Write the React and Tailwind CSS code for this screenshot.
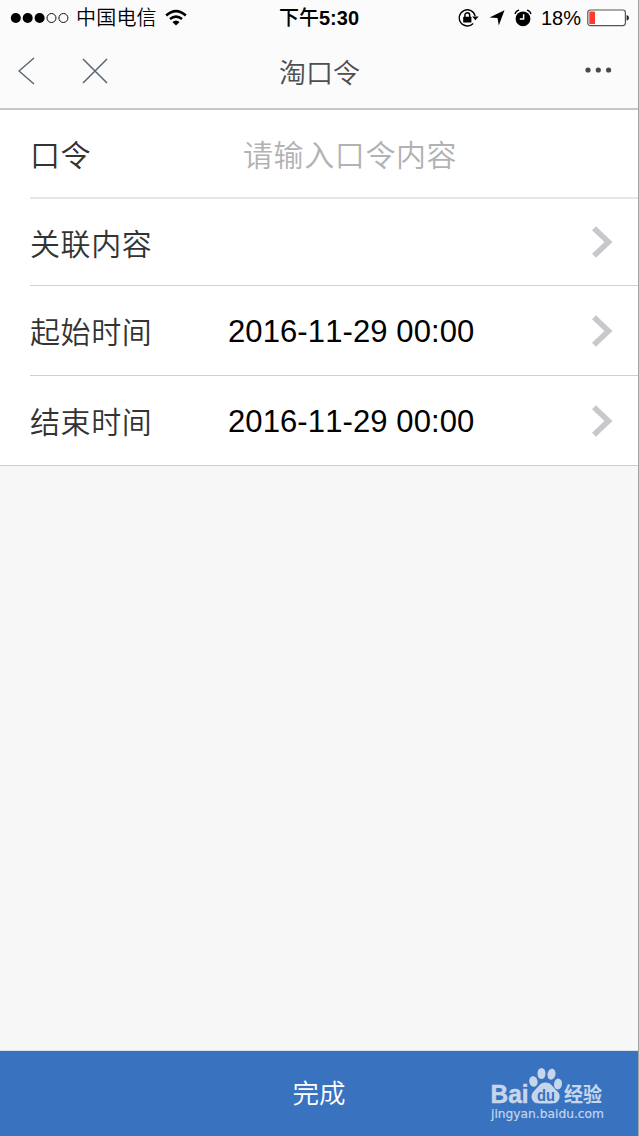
const rows = [
  { label: '口令', placeholder: '请输入口令内容', height: 'h-[89px]', line: 'border-b-2 border-[#e6e6e6]' },
  { label: '关联内容', height: 'h-[87px]', line: 'border-b border-[#d0d0d0]', arrow: true },
  { label: '起始时间', value: '2016-11-29 00:00', height: 'h-[90px]', line: 'border-b border-[#d0d0d0]', arrow: true },
  { label: '结束时间', value: '2016-11-29 00:00', height: 'h-[89px]', line: '', arrow: true },
];

function StatusBar() {
  return (
    <div className="h-[36px] flex items-center justify-between pl-[10px] pr-[8px] text-black">
      <div className="flex w-[200px] items-center">
        <svg width="60" height="12" viewBox="0 0 60 12">
          <circle cx="5.8" cy="6" r="5" />
          <circle cx="17.7" cy="6" r="5" />
          <circle cx="29.6" cy="6" r="5" />
          <circle cx="41.5" cy="6" r="4.5" fill="none" stroke="#111" />
          <circle cx="53.4" cy="6" r="4.5" fill="none" stroke="#111" />
        </svg>
        <span className="ml-[6px] text-[20px] leading-[36px] font-[350] whitespace-nowrap tracking-[0.2px]">中国电信</span>
        <svg className="ml-[8px]" width="22" height="18" viewBox="0 0 22 18" fill="none" stroke="#000" strokeWidth="2.6">
          <path d="M1.2 6.4Q11 -2.2 20.8 6.4" />
          <path d="M5 10.1Q11 5.2 17 10.1" />
          <path d="M11 16.5L7.4 13Q11 10 14.6 13Z" fill="#000" stroke="none" />
        </svg>
      </div>
      <span className="-ml-[2px] text-[20px] leading-[36px] font-medium">
        下午<b className="font-bold">5:30</b>
      </span>
      <div className="flex w-[200px] items-center justify-end">
        <svg width="21" height="20" viewBox="0 0 21 20" fill="none" stroke="#000" strokeWidth="1.3">
          <path d="M17.2 8A8.1 8.1 0 1 0 15.2 15.5" />
          <path d="M14.2 8.6H20.6L17.4 12.2Z" fill="#000" stroke="none" />
          <rect x="5.2" y="8.7" width="8.2" height="5.8" rx="0.5" fill="#000" stroke="none" />
          <path d="M6.9 9V7.2a2.4 2.4 0 0 1 4.8 0V9" strokeWidth="1.5" />
        </svg>
        <svg className="ml-[10px]" width="16" height="16" viewBox="0 0 16 16">
          <path d="M15.5 0.3L9.8 15.6L8.5 8L0.5 7.5Z" />
        </svg>
        <svg className="ml-[9px]" width="18" height="18" viewBox="0 0 18 18">
          <circle cx="9" cy="9.8" r="7.4" />
          <path d="M1 5Q1.8 1.9 5 1.1M17 5Q16.2 1.9 13 1.1" fill="none" stroke="#000" strokeWidth="1.3" />
          <path d="M9.6 5.2V10.1H5.8" fill="none" stroke="#fff" strokeWidth="1.5" />
        </svg>
        <span className="ml-[9px] text-[20px] leading-[36px]">18%</span>
        <svg className="ml-[6px]" width="43" height="18" viewBox="0 0 43 18">
          <rect x="0.8" y="1" width="37.6" height="15.6" rx="2.5" fill="#fff" stroke="#555" strokeWidth="1.2" />
          <rect x="2.3" y="2.5" width="5.7" height="12.6" rx="0.6" fill="#ff3b30" />
          <path d="M39.6 6Q42 6.5 42 8.8T39.6 11.7Z" fill="#222" />
        </svg>
      </div>
    </div>
  );
}

function NavBar() {
  return (
    <div className="h-[72px] flex items-center justify-between pl-[18px] pr-[26px]">
      <div className="flex w-[120px] items-center pb-[2px]">
        <svg width="18" height="28" viewBox="0 0 18 28" fill="none" stroke="#5a6370" strokeWidth="1.4">
          <path d="M16 1L1 14L16 27" />
        </svg>
        <svg className="ml-[46px]" width="26" height="26" viewBox="0 0 26 26" fill="none" stroke="#5a6370" strokeWidth="1.5">
          <path d="M1 1L25 25M25 1L1 25" />
        </svg>
      </div>
      <h1 className="pt-[3px] pl-px text-[27px] leading-[40px] font-[350] text-[#4a4f55]">淘口令</h1>
      <svg className="mb-[4px] ml-[85px]" width="27" height="6" viewBox="0 0 27 6" fill="#434a52">
        <circle cx="3" cy="3" r="2.6" />
        <circle cx="13.3" cy="3" r="2.6" />
        <circle cx="23.6" cy="3" r="2.6" />
      </svg>
    </div>
  );
}

function Row({ label, placeholder, value, height, line, arrow }) {
  return (
    <div className={`${height} ${line} ml-[30px] pr-[25px] flex items-center text-[30px] whitespace-nowrap`}>
      <span className="w-[198px] pt-[4px] font-[350] tracking-[0.6px] text-[#333]">{label}</span>
      {placeholder && <span className="ml-[15px] pt-[4px] font-[350] tracking-[0.6px] text-[#b2b2b2]">{placeholder}</span>}
      {value && <span className="pt-[4px] text-[31px] tracking-[0.1px] text-black [font-kerning:none]">{value}</span>}
      {arrow && (
        <svg className="ml-auto" width="21" height="32" viewBox="0 0 21 32" fill="none" stroke="#c7c7cc" strokeWidth="5.6">
          <path d="M2 2.2L16.4 16L2 29.8" />
        </svg>
      )}
    </div>
  );
}

function Watermark() {
  return (
    <svg className="absolute left-[488px] top-[14px]" width="122" height="62" viewBox="0 0 122 62" fill="#c6d6ec">
      <text x="2.5" y="37.5" fontSize="25" fontWeight="700" stroke="#c6d6ec" strokeWidth="0.5" textLength="38" lengthAdjust="spacingAndGlyphs">Bai</text>
      <ellipse cx="45.4" cy="16.5" rx="4.2" ry="5.4" transform="rotate(-12 45.4 16.5)" />
      <ellipse cx="53.5" cy="8.5" rx="4" ry="5.6" />
      <ellipse cx="63.5" cy="9.2" rx="4" ry="5.5" transform="rotate(12 63.5 9.2)" />
      <ellipse cx="70" cy="19" rx="4" ry="5.4" transform="rotate(8 70 19)" />
      <path d="M57.5 17.5C63.5 17.5 65 22.5 68.5 25.5C72 28.5 72.5 32 70.5 35.3C68 39.5 63.5 38.4 57.5 38.4S47 39.5 44.6 35.3C42.5 32 43.5 28.5 46.5 25.5C50 22.5 51.5 17.5 57.5 17.5Z" />
      <text x="49" y="35.5" fontSize="16" fontWeight="700" fill="#3972bf" textLength="18" lengthAdjust="spacingAndGlyphs">du</text>
      <text x="76" y="37" fontSize="20" fontWeight="700" textLength="38" lengthAdjust="spacingAndGlyphs">经验</text>
      <text x="3" y="53" fontSize="12.8" stroke="#c6d6ec" strokeWidth="0.2" className="font-['DejaVu_Sans',sans-serif]" textLength="113" lengthAdjust="spacingAndGlyphs">jingyan.baidu.com</text>
    </svg>
  );
}

export default function App() {
  return (
    <div className="flex h-[1136px] w-[639px] flex-col overflow-hidden border-r border-[#a3a3a3] bg-[#f7f7f7] font-['Liberation_Sans','Noto_Sans_CJK_SC',sans-serif]">
      <header className="h-[110px] border-b-2 border-[#c7c7c7] bg-[#fbfbfb]">
        <StatusBar />
        <NavBar />
      </header>
      <main className="border-b border-[#cfcfcf] bg-white">
        {rows.map((row) => (
          <Row key={row.label} {...row} />
        ))}
      </main>
      <footer className="relative mt-auto h-[86px] border-t border-[#d8e2e8] bg-[#3972bf]">
        <button className="h-full w-full pt-[3px] text-[26.5px] font-[350] text-white">完成</button>
        <Watermark />
      </footer>
    </div>
  );
}
